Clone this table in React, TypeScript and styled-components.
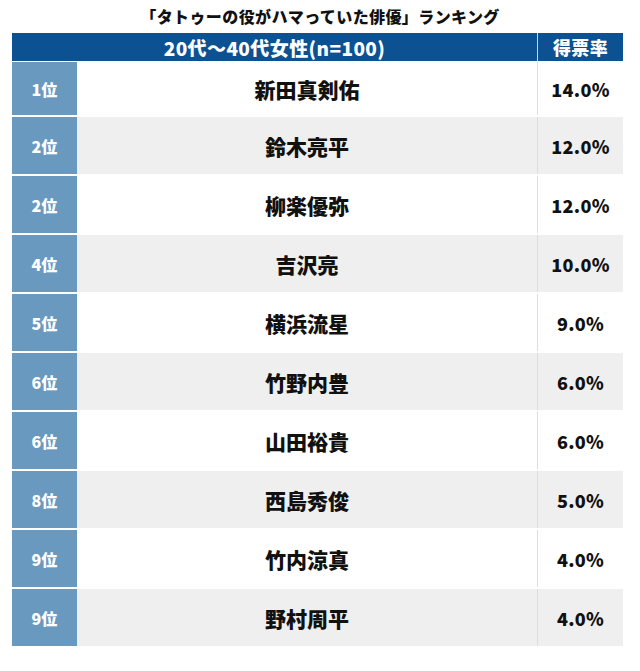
import styled, { createGlobalStyle } from "styled-components";

const GlobalStyle = createGlobalStyle`
  html, body {
    margin: 0;
    padding: 0;
    background: #ffffff;
  }
  body {
    font-family: "Noto Sans CJK JP", "Noto Sans", sans-serif;
  }
`;

type Entry = {
  rank: number;
  name: string;
  rate: string;
};

const entries: Entry[] = [
  { rank: 1, name: "新田真剣佑", rate: "14.0%" },
  { rank: 2, name: "鈴木亮平", rate: "12.0%" },
  { rank: 2, name: "柳楽優弥", rate: "12.0%" },
  { rank: 4, name: "吉沢亮", rate: "10.0%" },
  { rank: 5, name: "横浜流星", rate: "9.0%" },
  { rank: 6, name: "竹野内豊", rate: "6.0%" },
  { rank: 6, name: "山田裕貴", rate: "6.0%" },
  { rank: 8, name: "西島秀俊", rate: "5.0%" },
  { rank: 9, name: "竹内涼真", rate: "4.0%" },
  { rank: 9, name: "野村周平", rate: "4.0%" },
];

const App = () => {
  return (
    <Page>
      <GlobalStyle />
      <Title>「タトゥーの役がハマっていた俳優」ランキング</Title>

      <Table>
        <HeaderRow>
          <HeaderCell>20代〜40代女性(n=100)</HeaderCell>
          <HeaderCell $divided>得票率</HeaderCell>
        </HeaderRow>

        <Body>
          {entries.map((entry, i) => (
            <Row key={i} $shade={i % 2 === 1}>
              <RankCell>{entry.rank}位</RankCell>
              <NameCell>{entry.name}</NameCell>
              <RateCell>{entry.rate}</RateCell>
            </Row>
          ))}
        </Body>
      </Table>
    </Page>
  );
};

export default App;

// Styled Components
const Page = styled.div`
  width: 640px;
  height: 671px;
  padding-top: 5px;
  box-sizing: border-box;
`;

const Title = styled.h1`
  margin: 0;
  text-align: center;
  font-size: 16px;
  line-height: 22px;
  font-weight: 900;
  color: #111;
  letter-spacing: 0.4px;
`;

const Table = styled.div`
  width: 611px;
  margin: 6px 0 0 12px;
`;

const HeaderRow = styled.div`
  display: grid;
  grid-template-columns: 525px 86px;
  height: 28px;
  background: #0c5192;
`;

const HeaderCell = styled.div<{ $divided?: boolean }>`
  display: flex;
  align-items: center;
  justify-content: center;
  color: #ffffff;
  font-size: ${(p) => (p.$divided ? "18px" : "19px")};
  font-weight: 900;
  letter-spacing: 0.4px;
  border-left: ${(p) => (p.$divided ? "1px solid #c9d6e4" : "none")};
`;

const Body = styled.div`
  display: flex;
  flex-direction: column;
  gap: 2px;
  padding-top: 1px;
`;

const Row = styled.div<{ $shade: boolean }>`
  display: grid;
  grid-template-columns: 65px 460px 86px;
  height: 57px;
  background: ${(p) => (p.$shade ? "#efefef" : "#ffffff")};

  &:first-child {
    height: 53px;
  }
`;

const RankCell = styled.div`
  display: flex;
  align-items: center;
  justify-content: center;
  background: #6a99c0;
  color: #ffffff;
  font-size: 16px;
  font-weight: 900;
`;

const NameCell = styled.div`
  display: flex;
  align-items: center;
  justify-content: center;
  color: #111111;
  font-size: 21px;
  font-weight: 900;
`;

const RateCell = styled.div`
  display: flex;
  align-items: center;
  justify-content: center;
  border-left: 1px solid #dddddd;
  color: #111111;
  font-family: "Noto Sans CJK JP", "Noto Sans", sans-serif;
  font-size: 18px;
  font-weight: 900;
  letter-spacing: 0.3px;
`;
